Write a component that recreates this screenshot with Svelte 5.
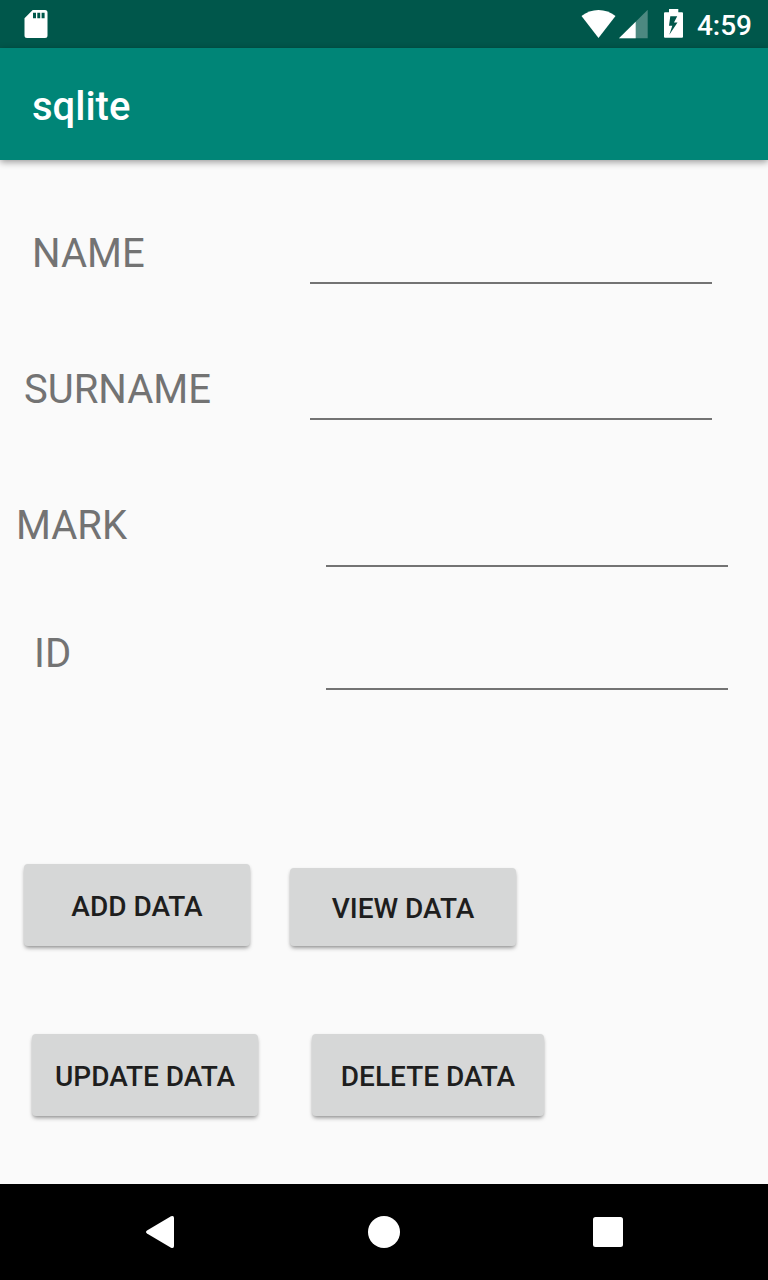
<script>
  const fields = [
    { label: 'NAME', cls: 'name' },
    { label: 'SURNAME', cls: 'surname' },
    { label: 'MARK', cls: 'mark' },
    { label: 'ID', cls: 'ident' }
  ];
</script>

<div class="screen">
  <header class="status">
    <svg class="sd" width="24" height="28" viewBox="0 0 24 28"><path fill="#fff" fill-rule="evenodd" d="M8.700 0H21Q23.500 0 23.500 2.500V25.500Q23.500 28 21 28H3Q.500 28 .500 25.500V8.300ZM9 2.800V8.200H12V2.800ZM13.300 2.800V8.200H16.200V2.800ZM17.600 2.800V8.200H20.600V2.800Z"/></svg>
    <div class="right">
      <svg class="wifi" width="36" height="28" viewBox="0 0 36 28"><path fill="#fff" d="M.500 6C10 -2 25 -2 34.500 6L17.500 28Z"/></svg>
      <svg class="cell" width="29" height="29" viewBox="0 0 29 29"><path fill="#fff" opacity=".3" d="M28.700 -.200V28.300H0Z"/><path fill="#fff" d="M16.700 11.800V28.300H0Z"/></svg>
      <svg class="bat" width="19" height="29" viewBox="0 0 19 29"><path fill="#fff" fill-rule="evenodd" d="M5 0H14.300V3.300H18Q19 3.300 19 4.300V27.800Q19 28.800 18 28.800H1Q0 28.800 0 27.800V4.300Q0 3.300 1 3.300H5ZM6.300 7.300L5 16.700H8.300L5.300 25.700L13.500 13.500H10L13.200 7.300Z"/></svg>
      <span class="time">4:59</span>
    </div>
  </header>
  <div class="appbar"><h1>sqlite</h1></div>
  <main>
    {#each fields as f}
      <label class="row {f.cls}"><span>{f.label}</span><input type="text" /></label>
    {/each}
    <div class="buttons first"><button class="add">ADD DATA</button><button class="view">VIEW DATA</button></div>
    <div class="buttons second"><button class="update">UPDATE DATA</button><button class="delete">DELETE DATA</button></div>
  </main>
  <nav>
    <svg width="32" height="34" viewBox="0 0 32 34"><path fill="#fff" d="M3 15.500L27 1.300Q30 0 30 3V31Q30 34 27 32.700L3 18.500Q1 17 3 15.500Z"/></svg>
    <svg width="32" height="32" viewBox="0 0 32 32"><circle cx="16" cy="16" r="16" fill="#fff"/></svg>
    <svg width="32" height="32" viewBox="0 0 32 32"><rect x="1" y="1" width="30" height="30" rx="2.500" fill="#fff"/></svg>
  </nav>
</div>

<style>
  :global(body) { margin: 0; }
  .screen { width: 768px; height: 1280px; display: flex; flex-direction: column; background: #fafafa; font-family: Roboto, sans-serif; overflow: hidden; }
  .status { height: 48px; flex: none; background: #00574b; display: flex; justify-content: space-between; box-sizing: border-box; padding: 0 16px 0 24px; }
  .status svg { display: block; }
  .sd { margin-top: 10px; }
  .right { display: flex; }
  .wifi { margin-top: 10px; margin-right: 2px; }
  .cell { margin-top: 10px; margin-right: 16px; }
  .bat { margin-top: 9px; margin-right: 14px; }
  .time { font-size: 28px; font-weight: 500; line-height: 52px; color: #fff; }
  .appbar { height: 112px; flex: none; background: #008577; display: flex; align-items: center; box-sizing: border-box; padding: 6px 0 0 32px; box-shadow: 0 2px 7px rgba(0,0,0,.4); }
  h1 { margin: 0; color: #fff; font-size: 40px; font-weight: 500; line-height: 48px; }
  main { flex: 1; display: flex; flex-direction: column; }
  .row { display: flex; justify-content: space-between; align-items: flex-start; flex: none; box-sizing: border-box; }
  .row span { color: #737373; font-size: 40px; line-height: 48px; }
  input { box-sizing: border-box; width: 402px; height: 54px; padding: 0; border: 0; border-bottom: 2px solid #737373; background: transparent; outline: 0; border-radius: 0; font: 36px Roboto, sans-serif; }
  .name { height: 136px; margin-top: 70px; padding: 0 56px 0 32px; }
  .surname { height: 136px; padding: 0 56px 0 24px; }
  .mark { height: 128px; padding: 0 40px 0 16px; }
  .mark input { height: 65px; }
  .ident { height: 234px; padding: 0 40px 0 34px; }
  .ident input { height: 60px; }
  .buttons { display: flex; align-items: flex-end; flex: none; }
  .first { height: 82px; padding-left: 24px; gap: 40px; }
  .second { height: 82px; margin-top: 88px; padding-left: 32px; gap: 54px; }
  button { box-sizing: border-box; width: 226px; height: 82px; padding: 4px 0 0; border: 0; border-radius: 4px; background: #d6d7d7; color: #1e1e1e; font: 500 28px/36px Roboto, sans-serif; box-shadow: 0 3px 4px -1px rgba(0,0,0,.36), 0 1px 3px rgba(0,0,0,.1); white-space: nowrap; }
  .view { height: 78px; }
  .delete { width: 232px; }
  nav { height: 96px; flex: none; background: #000; display: flex; align-items: center; justify-content: space-between; padding: 0 144px; }
</style>
